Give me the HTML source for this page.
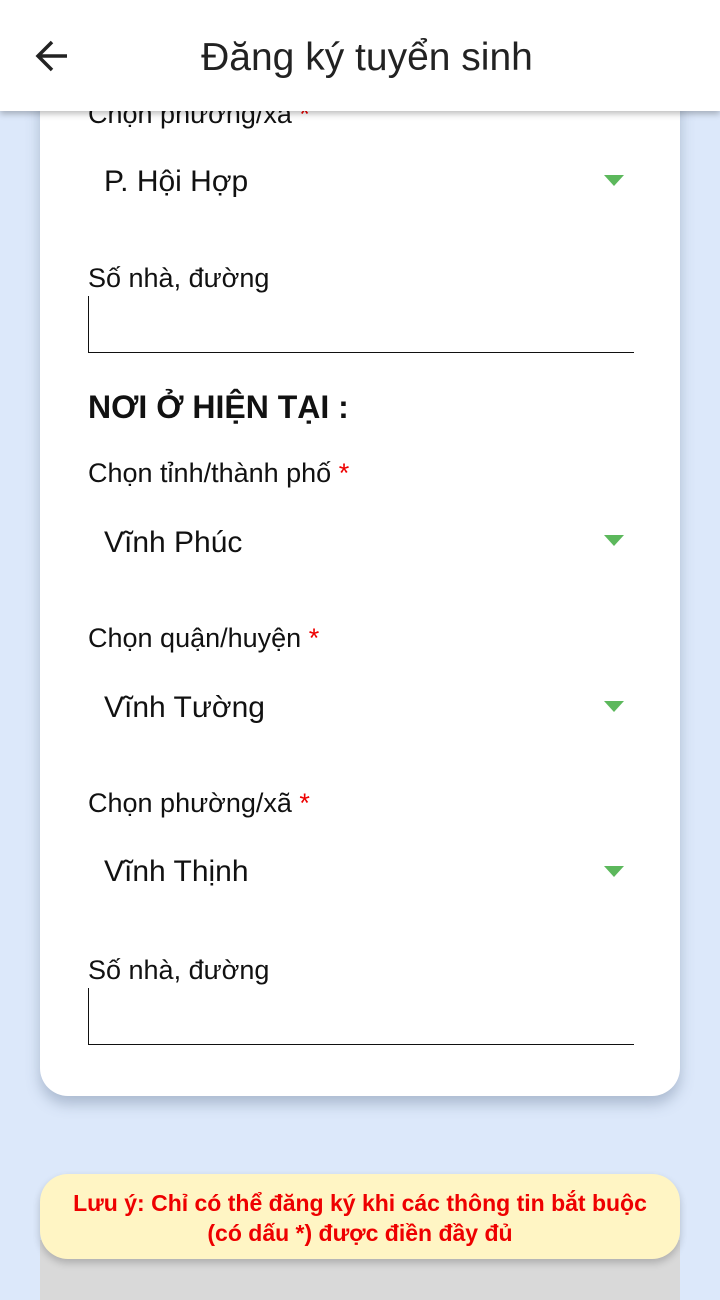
<!DOCTYPE html>
<html><head><meta charset="utf-8"><style>
*{margin:0;padding:0;box-sizing:border-box}
body{width:720px;height:1280px;overflow:hidden;background:#dce8fa;font-family:"Liberation Sans",sans-serif;color:#111;position:relative}
.card{position:absolute;left:40px;top:60px;width:640px;height:1036px;background:#fff;border-radius:28px;box-shadow:0 8px 14px rgba(80,100,130,.35)}
.hdr{position:absolute;left:0;top:0;width:720px;height:111px;background:#fff;box-shadow:0 3px 6px rgba(0,0,0,.25);z-index:5}
.t{position:absolute;white-space:nowrap;line-height:1}
.lbl{font-size:27px;left:88px}
.val{font-size:30px;left:104px}
.req{color:#e00}
.tri{position:absolute;left:604px;width:0;height:0;border-left:10px solid transparent;border-right:10px solid transparent;border-top:11px solid #5cb85c}
.inp{position:absolute;left:88px;width:546px;height:57px;border-left:1.5px solid #111;border-bottom:1.5px solid #111}
.note{position:absolute;left:40px;top:1174px;width:640px;height:85px;background:#fff5c4;border-radius:28px;box-shadow:0 4px 8px rgba(0,0,0,.2);color:#e00;font-weight:bold;font-size:23px;text-align:center;line-height:30px;padding-top:14px;z-index:2}
.gray{position:absolute;left:40px;top:1240px;width:640px;height:60px;background:#d9d9d9}
</style></head><body>
<div class="card"></div>
<div class="hdr">
<svg style="position:absolute;left:34px;top:38px" width="36" height="36" viewBox="0 0 36 36"><path d="M33 18H5M18 4L4 18l14 14" fill="none" stroke="#222" stroke-width="3.5"/></svg>
<div class="t" style="left:0;width:734px;text-align:center;top:38px;font-size:39px;color:#222">Đăng ký tuyển sinh</div>
</div>
<div class="t lbl" style="top:101px">Chọn phường/xã <span class="req">*</span></div>
<div class="t val" style="top:167px">P. Hội Hợp</div><div class="tri" style="top:175px"></div>
<div class="t lbl" style="top:265px">Số nhà, đường</div>
<div class="inp" style="top:296px"></div>
<div class="t" style="left:88px;top:391px;font-size:32px;font-weight:bold">NƠI Ở HIỆN TẠI :</div>
<div class="t lbl" style="top:460px">Chọn tỉnh/thành phố <span class="req">*</span></div>
<div class="t val" style="top:528px">Vĩnh Phúc</div><div class="tri" style="top:535px"></div>
<div class="t lbl" style="top:625px">Chọn quận/huyện <span class="req">*</span></div>
<div class="t val" style="top:693px">Vĩnh Tường</div><div class="tri" style="top:701px"></div>
<div class="t lbl" style="top:790px">Chọn phường/xã <span class="req">*</span></div>
<div class="t val" style="top:857px">Vĩnh Thịnh</div><div class="tri" style="top:866px"></div>
<div class="t lbl" style="top:957px">Số nhà, đường</div>
<div class="inp" style="top:988px"></div>
<div class="gray"></div>
<div class="note">Lưu ý: Chỉ có thể đăng ký khi các thông tin bắt buộc<br>(có dấu *) được điền đầy đủ</div>
</body></html>
